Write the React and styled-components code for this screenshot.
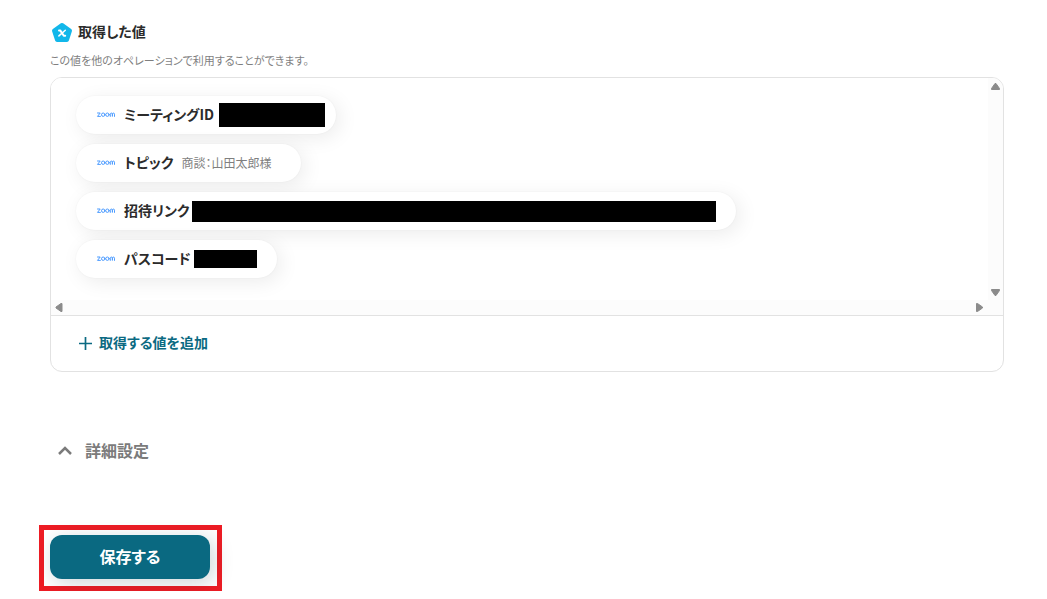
import React from "react";
import styled, { createGlobalStyle } from "styled-components";

const GlobalStyle = createGlobalStyle`
  *, *::before, *::after { box-sizing: border-box; }
  body {
    margin: 0;
    background: #fff;
    color: #2b2b2b;
    font-family: "Noto Sans CJK JP", "Noto Sans", sans-serif;
    font-feature-settings: "palt";
  }
`;

const Page = styled.main`
  padding: 20px 43px 0 50px;
`;

const Heading = styled.h2`
  display: flex;
  align-items: flex-start;
  gap: 4px;
  margin: 0;
  font-size: 14px;
  font-weight: 700;
  line-height: 22px;
`;

const Description = styled.p`
  margin: 8px 0 9px;
  color: #7f7f7f;
  font-size: 11px;
  line-height: 16px;
`;

const Panel = styled.section`
  overflow: hidden;
  border: 1px solid #e2e2e2;
  border-radius: 12px;
`;

const ScrollArea = styled.div`
  display: grid;
  grid-template-columns: 1fr 15px;
  grid-template-rows: auto 15px;
  background: #fcfcfc;
`;

const ValueList = styled.ul`
  display: flex;
  flex-direction: column;
  align-items: flex-start;
  gap: 10px;
  margin: 0;
  padding: 18px 25px 22px;
  overflow: hidden;
  background: #fff;
  list-style: none;
`;

const ValuePill = styled.li`
  display: flex;
  align-items: center;
  height: 38px;
  padding: 0 ${(p) => p.$end}px 0 20px;
  border-radius: 20px;
  background: #fff;
  box-shadow: 0 0 2px rgba(0, 0, 0, 0.05), 4px 4px 20px rgba(0, 0, 0, 0.08);
`;

const ValueName = styled.span`
  margin: 0 ${(p) => p.$gap}px 0 8px;
  padding-bottom: 2px;
  font-size: 14px;
  font-weight: 700;
  line-height: 20px;
`;

const ValueText = styled.span`
  color: #7f7f7f;
  font-size: 12px;
  line-height: 20px;
`;

const Redacted = styled.span`
  width: ${(p) => p.$width}px;
  height: ${(p) => p.$height}px;
  background: #000;
`;

const VerticalTrack = styled.div`
  display: flex;
  flex-direction: column;
  align-items: center;
  justify-content: space-between;
  padding: 4px 0 3px;
`;

const HorizontalTrack = styled.div`
  display: flex;
  align-items: center;
  justify-content: space-between;
  padding: 0 4px;
`;

const ScrollArrow = styled.button`
  display: flex;
  padding: 0;
  border: 0;
  background: none;
`;

const PanelFooter = styled.div`
  padding: 15px 24px 16px;
  border-top: 1px solid #e2e2e2;
`;

const AddButton = styled.button`
  display: flex;
  align-items: flex-start;
  gap: 4px;
  height: 24px;
  padding: 0;
  border: 0;
  background: none;
  color: #0b6a82;
  font: inherit;
  font-size: 14px;
  font-weight: 700;
  line-height: 22px;

  svg { margin-top: 2px; }
`;

const DetailsToggle = styled.button`
  display: flex;
  align-items: center;
  gap: 13px;
  margin: 66px 0 0 8px;
  padding: 0;
  border: 0;
  background: none;
  color: #7b7b7b;
  font: inherit;
  font-size: 16px;
  font-weight: 700;
  line-height: 24px;

  svg { margin-top: 2px; }
`;

const Highlight = styled.div`
  width: fit-content;
  margin: 63px 0 0 -11px;
  padding: 5px 7px 7px 6px;
  border: 5px solid #ed1c24;
`;

const SaveButton = styled.button`
  display: block;
  width: 160px;
  height: 44px;
  padding: 0 0 2px;
  border: 0;
  border-radius: 12px;
  background: #0a6981;
  box-shadow: 4px 4px 20px rgba(10, 50, 65, 0.2);
  color: #fff;
  font: inherit;
  font-size: 16px;
  font-weight: 700;
`;

const VariableIcon = () => (
  <svg width="24" height="24" viewBox="0 0 24 24" aria-hidden="true">
    <path
      d="M12 5 20 10.6 17 20H7L4 10.6Z"
      fill="#12b7ea"
      stroke="#12b7ea"
      strokeWidth="4"
      strokeLinejoin="round"
    />
    <path
      d="M9 10.4h1.2L13.8 15.800H15.200"
      fill="none"
      stroke="#fff"
      strokeWidth="2"
      strokeLinecap="round"
      strokeLinejoin="round"
    />
    <path
      d="M15.300 10.300 8.900 15.900"
      fill="none"
      stroke="#fff"
      strokeWidth="1.500"
      strokeLinecap="round"
    />
  </svg>
);

const ZoomLogo = () => (
  <svg width="20" height="20" viewBox="0 0 20 20" role="img" aria-label="zoom">
    <g fill="none" stroke="#4b9bff" strokeWidth="1" strokeLinejoin="round" strokeLinecap="round">
      <path d="M1.5 8h2.7L1.5 11.400h2.900" />
      <circle cx="7.200" cy="9.700" r="1.700" />
      <circle cx="11.400" cy="9.700" r="1.700" />
      <path d="M14.300 11.400V9.200c0-1.500 2.100-1.500 2.100 0v2.200V9.200c0-1.500 2.100-1.500 2.100 0v2.200" />
    </g>
  </svg>
);

const arrowPaths = {
  up: "M4 1.5h1L8.5 6.5v1h-8v-1Z",
  down: "M.5 1.5h8v1L5 7.5H4L.5 2.5Z",
  left: "M1 4v1L6 8.5h1v-8H6Z",
  right: "M1.5.5h1l5 3.5v1l-5 3.5h-1Z",
};

const Arrow = ({ direction, label }) => (
  <ScrollArrow type="button" aria-label={label}>
    <svg width="9" height="9" viewBox="0 0 9 9" aria-hidden="true">
      <path d={arrowPaths[direction]} fill="#8b8b8b" stroke="#8b8b8b" strokeLinejoin="round" />
    </svg>
  </ScrollArrow>
);

const values = [
  { name: "ミーティングID", gap: 5, end: 11, mask: [106, 24] },
  { name: "トピック", gap: 8, end: 30, text: "商談：山田太郎様" },
  { name: "招待リンク", gap: 3, end: 20, mask: [524, 21] },
  { name: "パスコード", gap: 3, end: 20, mask: [63, 18] },
];

export default function App() {
  return (
    <>
      <GlobalStyle />
      <Page lang="ja">
        <Heading>
          <VariableIcon />
          取得した値
        </Heading>
        <Description>この値を他のオペレーションで利用することができます。</Description>
        <Panel>
          <ScrollArea>
            <ValueList>
              {values.map((v) => (
                <ValuePill key={v.name} $end={v.end}>
                  <ZoomLogo />
                  <ValueName $gap={v.gap}>{v.name}</ValueName>
                  {v.text && <ValueText>{v.text}</ValueText>}
                  {v.mask && <Redacted $width={v.mask[0]} $height={v.mask[1]} />}
                </ValuePill>
              ))}
            </ValueList>
            <VerticalTrack>
              <Arrow direction="up" label="上へスクロール" />
              <Arrow direction="down" label="下へスクロール" />
            </VerticalTrack>
            <HorizontalTrack>
              <Arrow direction="left" label="左へスクロール" />
              <Arrow direction="right" label="右へスクロール" />
            </HorizontalTrack>
          </ScrollArea>
          <PanelFooter>
            <AddButton type="button">
              <svg width="20" height="20" viewBox="0 0 20 20" aria-hidden="true">
                <path d="M10.5 4v13M4 10.5h13" stroke="currentColor" strokeWidth="1.7" />
              </svg>
              取得する値を追加
            </AddButton>
          </PanelFooter>
        </Panel>
        <DetailsToggle type="button" aria-expanded="false">
          <svg width="14" height="14" viewBox="0 0 14 14" aria-hidden="true">
            <path d="M1 10 7 4l6 6" fill="none" stroke="currentColor" strokeWidth="2.5" />
          </svg>
          詳細設定
        </DetailsToggle>
        <Highlight>
          <SaveButton type="submit">保存する</SaveButton>
        </Highlight>
      </Page>
    </>
  );
}
